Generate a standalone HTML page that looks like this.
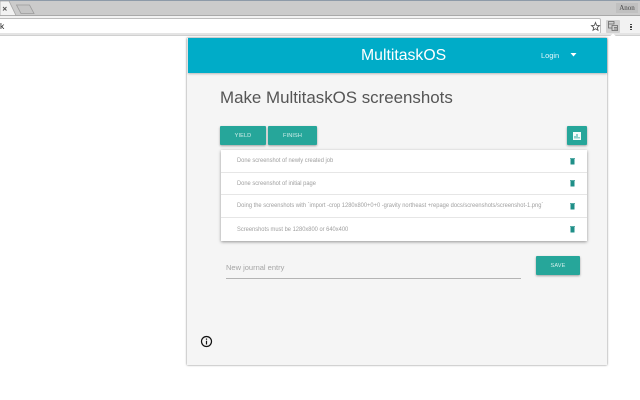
<!DOCTYPE html>
<html>
<head>
<meta charset="utf-8">
<style>
html,body{margin:0;padding:0;width:640px;height:400px;overflow:hidden;background:#fff;font-family:"Liberation Sans",sans-serif}
div{position:absolute;box-sizing:border-box}
.t{white-space:nowrap}
.btn{background:#26a69a;border-radius:1px;box-shadow:0 1px 2px rgba(0,0,0,.35);color:#d4efec;font-size:5.600px;text-align:center;letter-spacing:.1px}
.row{left:221px;width:366px;background:#fff;border-bottom:1px solid #e6e6e6}
.row .t{left:16px;font-size:6.300px;line-height:8px;color:#a0a0a0;transform:scaleX(.913);transform-origin:0 0}
svg{position:absolute}
</style>
</head>
<body>
<div style="left:0;top:0;width:640px;height:1px;background:#8d9aa8"></div>
<div style="left:0;top:1px;width:640px;height:14px;background:#cbcbcb"></div>
<div style="left:0;top:15px;width:640px;height:3px;background:#f2f2f2;border-top:1px solid #a9a9a9"></div>
<svg style="left:0;top:0" width="60" height="19" viewBox="0 0 60 19">
<path d="M0 1H9L16 15.500H0Z" fill="#f2f2f2" stroke="#a5a5a5" stroke-width=".8"/>
<path d="M16.500 5H29.500L34 13.500H21Z" fill="#c6c6c6" stroke="#9a9a9a" stroke-width=".8"/>
<path d="M3 7L6.500 10.500M6.500 7L3 10.500" stroke="#555" stroke-width="1"/>
</svg>
<div class="t" style="left:616px;top:2.500px;width:22px;height:10px;background:#c0c0c0;color:#444;font-size:7px;line-height:10px;text-align:center;font-family:'Liberation Serif',serif">Anon</div>

<div style="left:0;top:16px;width:640px;height:20px;background:#f2f2f2"></div>
<div style="left:-4px;top:18px;width:605px;height:16px;background:#fff;border:1px solid #bdbdbd;border-radius:2px"></div>
<div class="t" style="left:0;top:20px;font-size:8.500px;color:#222;line-height:12px">k</div>
<svg style="left:590px;top:21px" width="11" height="11" viewBox="0 0 11 11"><path d="M5.500 1.500L6.600 4.300 9.500 4.600 7.300 6.500 8 9.300 5.500 7.800 3 9.300 3.700 6.500 1.500 4.600 4.400 4.300Z" fill="none" stroke="#555" stroke-width=".9"/></svg>
<div style="left:606px;top:19.500px;width:14px;height:13px;background:#d0d0d0;border-radius:1px"></div>
<svg style="left:607px;top:20px" width="12" height="12" viewBox="0 0 12 12"><path d="M1.500 1.500H7V4H1.500ZM1.500 4V8H5M5 5.500H10.500V10.500H5ZM7 7.500H10M7 9H10" fill="none" stroke="#666" stroke-width=".8"/></svg>
<div style="left:630px;top:23.500px;width:1.500px;height:1.500px;background:#444"></div>
<div style="left:630px;top:26px;width:1.500px;height:1.500px;background:#444"></div>
<div style="left:630px;top:28.500px;width:1.500px;height:1.500px;background:#444"></div>
<div style="left:0;top:33px;width:640px;height:3px;background:#e4e4e4;border-bottom:1px solid #d0d0d0"></div>
<div style="left:0;top:36px;width:640px;height:364px;background:#fff"></div>

<svg style="left:605px;top:33px" width="16" height="5" viewBox="0 0 16 5"><path d="M3 5L8 .5 13 5Z" fill="#fff"/></svg>

<div style="left:187px;top:38px;width:420px;height:327px;background:#f5f5f5;box-shadow:0 0 2px rgba(0,0,0,.55)"></div>
<div style="left:188px;top:38px;width:419px;height:35px;background:#00acc8;box-shadow:0 1px 2px rgba(0,0,0,.25)"></div>
<div class="t" style="left:361px;top:46px;font-size:15.800px;line-height:20px;color:#fff">MultitaskOS</div>
<div class="t" style="left:541px;top:50px;font-size:7.400px;line-height:11px;color:#e6f7fa">Login</div>
<svg style="left:570px;top:53px" width="7" height="4" viewBox="0 0 7 4"><path d="M.5 0H6.500L3.500 3.500Z" fill="#fff"/></svg>

<div class="t" style="left:220px;top:87px;font-size:16.900px;line-height:22px;color:#555">Make MultitaskOS screenshots</div>

<div class="btn" style="left:220px;top:126px;width:46px;height:19px;line-height:20px">YIELD</div>
<div class="btn" style="left:268px;top:126px;width:49px;height:19px;line-height:20px">FINISH</div>
<div class="btn" style="left:567px;top:126px;width:20px;height:19px"></div>
<svg style="left:573px;top:132px" width="8" height="8" viewBox="0 0 8 8"><path d="M0 0H8V8H0Z" fill="#f4fbfa"/><path d="M2 6.500V4M4 6.500V2M6 6.500V5" stroke="#26a69a" stroke-width="1"/></svg>

<div style="left:221px;top:150px;width:366px;height:91px;background:#fff;box-shadow:0 1px 3px rgba(0,0,0,.4)"></div>
<div class="row" style="top:150px;height:23px"><div class="t" style="top:7px">Done screenshot of newly created job</div></div>
<div class="row" style="top:173px;height:22px"><div class="t" style="top:7px">Done screenshot of initial page</div></div>
<div class="row" style="top:195px;height:23px"><div class="t" style="top:7px">Doing the screenshots with `import -crop 1280x800+0+0 -gravity northeast +repage docs/screenshots/screenshot-1.png`</div></div>
<div class="row" style="top:218px;height:23px;border-bottom:0"><div class="t" style="top:8px">Screenshots must be 1280x800 or 640x400</div></div>

<svg style="left:569px;top:157px" width="7" height="8" viewBox="0 0 7 8"><path d="M1.500 2H5.500V7.500H1.500ZM1 1H6V1.700H1Z" fill="#1f8f88"/></svg>
<svg style="left:569px;top:179px" width="7" height="8" viewBox="0 0 7 8"><path d="M1.500 2H5.500V7.500H1.500ZM1 1H6V1.700H1Z" fill="#1f8f88"/></svg>
<svg style="left:569px;top:202px" width="7" height="8" viewBox="0 0 7 8"><path d="M1.500 2H5.500V7.500H1.500ZM1 1H6V1.700H1Z" fill="#1f8f88"/></svg>
<svg style="left:569px;top:225px" width="7" height="8" viewBox="0 0 7 8"><path d="M1.500 2H5.500V7.500H1.500ZM1 1H6V1.700H1Z" fill="#1f8f88"/></svg>

<div class="t" style="left:226px;top:262px;font-size:7.500px;line-height:11px;color:#a5a5a5">New journal entry</div>
<div style="left:226px;top:278px;width:295px;height:1px;background:#b4b4b4"></div>
<div class="btn" style="left:536px;top:256px;width:44px;height:19px;line-height:20px">SAVE</div>

<svg style="left:200px;top:335px" width="13" height="13" viewBox="0 0 13 13"><circle cx="6.500" cy="6.500" r="5" fill="none" stroke="#111" stroke-width="1.200"/><path d="M6.500 5.700V9.500M6.500 3.500V4.700" stroke="#111" stroke-width="1.200"/></svg>
</body>
</html>
